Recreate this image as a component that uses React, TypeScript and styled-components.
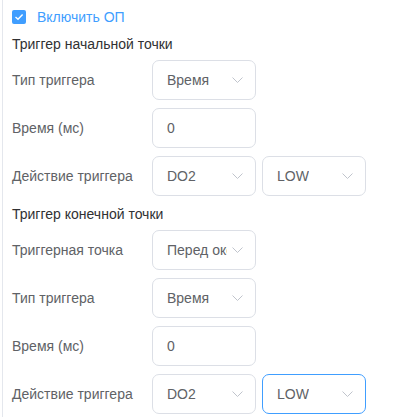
import React from 'react';
import styled, { createGlobalStyle } from 'styled-components';

const GlobalStyle = createGlobalStyle`
    html, body {
        margin: 0;
        padding: 0;
        background: #ffffff;
        font-family: "Liberation Sans", Arial, sans-serif;
    }
`;

const Page = styled.div`
    padding-left: 2px;
    height: 417px;
    box-sizing: border-box;
`;

const Panel = styled.div`
    border-left: 1px solid #e4e7ed;
    height: 100%;
    padding: 10px 0 0 9px;
    box-sizing: border-box;
`;

const CheckRow = styled.label`
    display: flex;
    align-items: center;
    gap: 11px;
    height: 14px;
    font-size: 14px;
    color: #409eff;
    cursor: pointer;
`;

const CheckBox = styled.span`
    width: 14px;
    height: 14px;
    border-radius: 2px;
    background: #409eff;
    display: flex;
    align-items: center;
    justify-content: center;
`;

const Heading = styled.div<{ $top: number }>`
    margin-top: ${p => p.$top}px;
    margin-bottom: 6px;
    height: 20px;
    line-height: 20px;
    font-size: 14px;
    color: #303133;
`;

const Rows = styled.div`
    display: flex;
    flex-direction: column;
    gap: 8px;
`;

const Row = styled.div`
    display: flex;
    align-items: center;
    height: 40px;
`;

const Label = styled.div`
    width: 140px;
    font-size: 14px;
    color: #606266;
`;

const Controls = styled.div`
    display: flex;
    gap: 6px;
`;

const Field = styled.div<{ $focused?: boolean }>`
    position: relative;
    width: 104px;
    height: 40px;
    box-sizing: border-box;
    border: 1px solid ${p => (p.$focused ? '#409eff' : '#dcdfe6')};
    border-radius: 7px;
    display: flex;
    align-items: center;
    padding: 0 28px 0 14px;
    font-size: 14px;
    color: #606266;
    background: #fff;
`;

const Value = styled.span`
    white-space: nowrap;
    overflow: hidden;
`;

const Arrow = styled.svg`
    position: absolute;
    right: 12px;
    top: 50%;
    margin-top: -3px;
`;

const Chevron = () => (
    <Arrow width="11" height="6" viewBox="0 0 11 6">
        <path d="M0.5 0.5 L5.5 5.5 L10.5 0.5" fill="none" stroke="#c0c4cc" strokeWidth="1" />
    </Arrow>
);

const Select = ({ value, focused }: { value: string; focused?: boolean }) => (
    <Field $focused={focused}>
        <Value>{value}</Value>
        <Chevron />
    </Field>
);

const Input = ({ value }: { value: string }) => (
    <Field>
        <Value>{value}</Value>
    </Field>
);

const App = () => (
    <>
        <GlobalStyle />
        <Page>
            <Panel>
                <CheckRow>
                    <CheckBox>
                        <svg width="10" height="8" viewBox="0 0 10 8">
                            <path d="M1.5 4 L4 6.3 L8.6 1.5" fill="none" stroke="#fff" strokeWidth="1.4" />
                        </svg>
                    </CheckBox>
                    Включить ОП
                </CheckRow>

                <Heading $top={10}>Триггер начальной точки</Heading>
                <Rows>
                    <Row>
                        <Label>Тип триггера</Label>
                        <Select value="Время" />
                    </Row>
                    <Row>
                        <Label>Время (мс)</Label>
                        <Input value="0" />
                    </Row>
                    <Row>
                        <Label>Действие триггера</Label>
                        <Controls>
                            <Select value="DO2" />
                            <Select value="LOW" />
                        </Controls>
                    </Row>
                </Rows>

                <Heading $top={8}>Триггер конечной точки</Heading>
                <Rows>
                    <Row>
                        <Label>Триггерная точка</Label>
                        <Select value="Перед окончанием" />
                    </Row>
                    <Row>
                        <Label>Тип триггера</Label>
                        <Select value="Время" />
                    </Row>
                    <Row>
                        <Label>Время (мс)</Label>
                        <Input value="0" />
                    </Row>
                    <Row>
                        <Label>Действие триггера</Label>
                        <Controls>
                            <Select value="DO2" />
                            <Select value="LOW" focused />
                        </Controls>
                    </Row>
                </Rows>
            </Panel>
        </Page>
    </>
);

export default App;
